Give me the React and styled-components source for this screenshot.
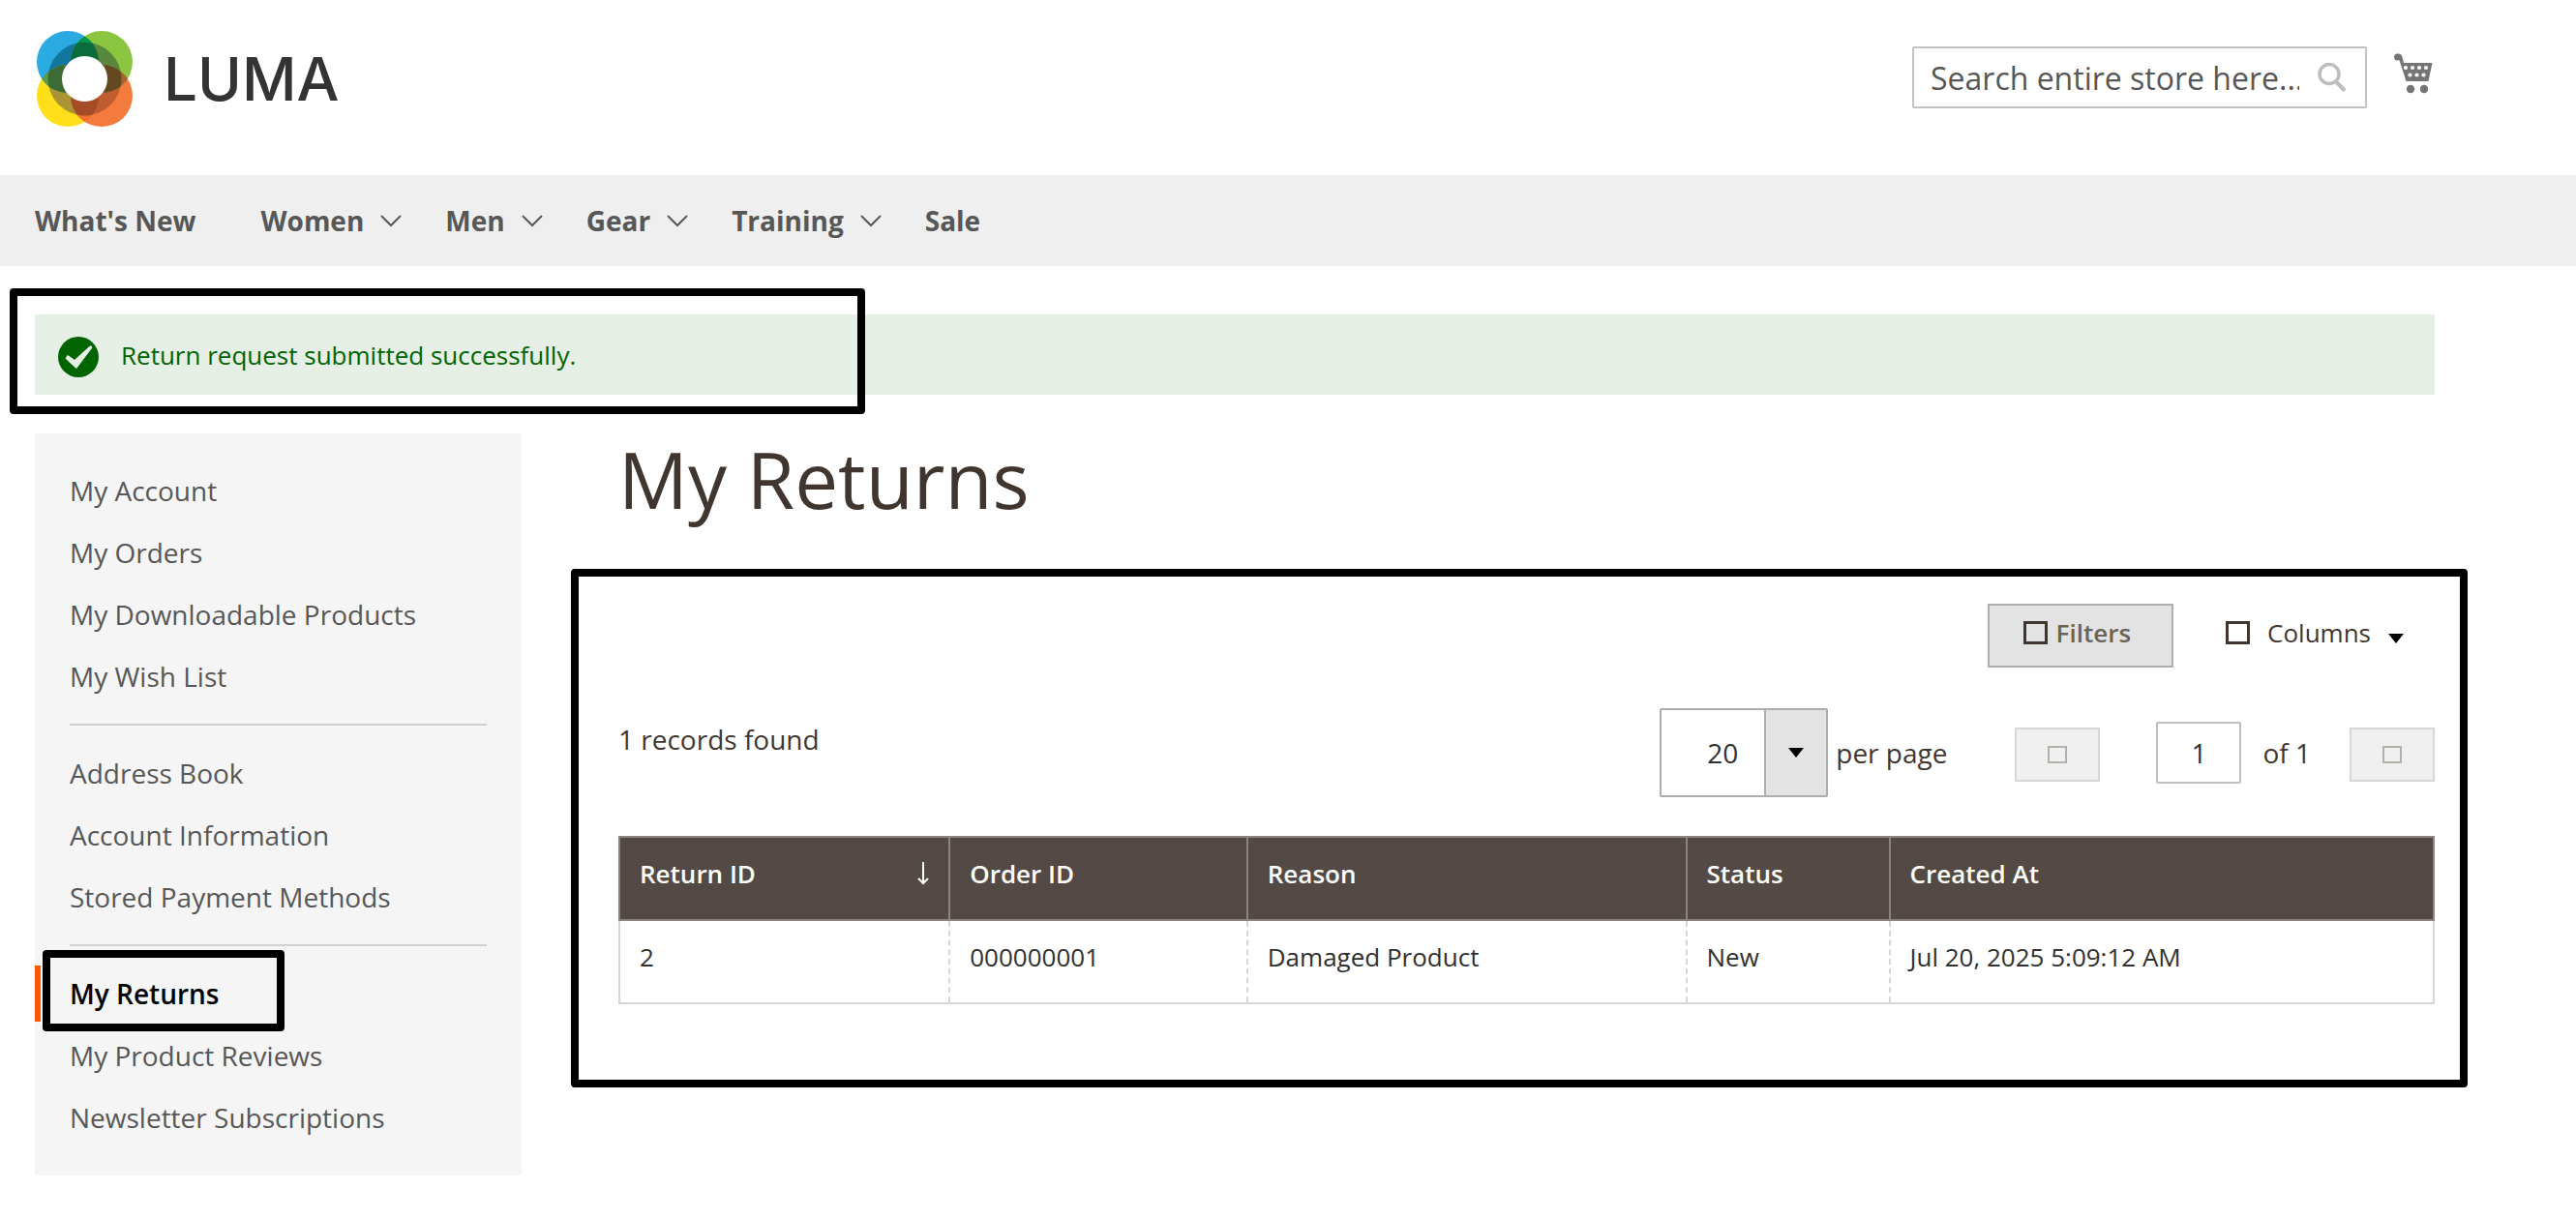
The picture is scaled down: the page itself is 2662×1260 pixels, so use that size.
import React from 'react';
import styled, { createGlobalStyle, css } from 'styled-components';

const GlobalStyle = createGlobalStyle`
  *, *::before, *::after { box-sizing: border-box; }
  body {
    margin: 0;
    background: #fff;
    color: #41362f;
    font-family: 'Open Sans', 'Noto Sans', sans-serif;
    font-size: 28px;
    line-height: 38px;
  }
  button, input, select { font: inherit; color: inherit; margin: 0; border-radius: 0; }
  a { color: inherit; text-decoration: none; }
  h1, p, ul { margin: 0; padding: 0; }
  ul { list-style: none; }
  svg { display: block; flex: none; }
`;

const container = css`
  max-width: 2552px;
  padding-left: 36px;
  padding-right: 36px;
`;

const Header = styled.header`
  ${container}
  display: flex;
  justify-content: space-between;
  align-items: flex-start;
  padding-top: 32px;
  padding-bottom: 50px;
`;

const Brand = styled.a`
  display: flex;
  align-items: center;
  gap: 32px;
  padding-left: 2px;
`;

const Wordmark = styled.span`
  font-family: Inter, sans-serif;
  font-weight: 500;
  font-size: 62px;
  line-height: 99px;
  color: #333;
`;

const HeaderTools = styled.div`
  display: flex;
  align-items: center;
  gap: 28px;
  padding-top: 16px;
`;

const SearchForm = styled.form`
  position: relative;
`;

const SearchInput = styled.input`
  display: block;
  width: 470px;
  height: 64px;
  padding: 0 68px 0 17px;
  border: 2px solid #c2c2c2;
  border-radius: 2px;
  background: #fff;
  font-size: 32px;
  &::placeholder { color: #575757; opacity: 1; }
`;

const SearchButton = styled.button`
  position: absolute;
  top: 0;
  right: 0;
  height: 64px;
  padding: 0 20px;
  border: 0;
  background: none;
`;

const CartLink = styled.a`
  padding: 0 2px 8px 0;
`;

const Nav = styled.nav`
  background: #efefef;
`;

const NavList = styled.ul`
  ${container}
  display: flex;
  gap: 45px;
`;

const NavLink = styled.a`
  display: flex;
  align-items: center;
  gap: 17px;
  padding-right: ${(p) => (p.$wide ? 22 : 0)}px;
  line-height: 94px;
  font-weight: 700;
  color: #575757;
`;

const Main = styled.main`
  ${container}
  padding-top: 50px;
  padding-bottom: 45px;
`;

const Marker = styled.span`
  position: absolute;
  border: 8px solid #000;
  border-radius: 4px;
  pointer-events: none;
`;

const Message = styled.div`
  position: relative;
  display: flex;
  align-items: center;
  gap: 23px;
  min-height: 83px;
  margin-bottom: 40px;
  padding: 0 24px;
  background: #e5efe5;
  color: #006400;
  font-size: 26px;
  svg { margin-top: 4px; }
`;

const MessageMarker = styled(Marker)`
  top: -27px;
  left: -26px;
  width: 884px;
  height: 130px;
`;

const Columns = styled.div`
  display: flex;
  align-items: flex-start;
  gap: 100px;
`;

const Sidebar = styled.nav`
  flex: none;
  width: 503px;
  padding: 30px 0 31px;
  background: #f5f5f5;
`;

const SideList = styled.ul`
  display: flex;
  flex-direction: column;
  gap: 6px;
`;

const SideItem = styled.li`
  position: relative;
`;

const SideLink = styled.a`
  display: block;
  padding-left: 30px;
  border-left: 6px solid ${(p) => (p.$current ? '#ff5501' : 'transparent')};
  line-height: 58px;
  font-weight: ${(p) => (p.$current ? 600 : 400)};
  color: ${(p) => (p.$current ? '#000' : '#575757')};
`;

const SideDivider = styled.li`
  height: 2px;
  margin: 14px 36px;
  background: #d1d1d1;
`;

const SideMarker = styled(Marker)`
  top: -16px;
  left: 8px;
  width: 250px;
  height: 84px;
`;

const Content = styled.div`
  flex: 1;
  min-width: 0;
`;

const Title = styled.h1`
  margin-bottom: 46px;
  font-size: 80px;
  line-height: 94px;
  font-weight: 400;
`;

const Panel = styled.section`
  position: relative;
  padding: 36px 0 86px;
`;

const PanelMarker = styled(Marker)`
  inset: 0 -34px 0 -49px;
`;

const Actions = styled.div`
  display: flex;
  justify-content: flex-end;
  gap: 20px;
  margin-bottom: 42px;
`;

const ActionButton = styled.button`
  display: flex;
  align-items: center;
  gap: ${(p) => (p.$filled ? 9 : 18)}px;
  height: 66px;
  padding: 0 ${(p) => (p.$filled ? 42 : 30)}px 7px ${(p) => (p.$filled ? 35 : 32)}px;
  border: 2px solid ${(p) => (p.$filled ? '#adadad' : 'transparent')};
  background: ${(p) => (p.$filled ? '#e3e3e3' : 'none')};
  color: ${(p) => (p.$filled ? '#6b6355' : '#41362f')};
  font-size: 26px;
  font-weight: ${(p) => (p.$filled ? 600 : 400)};
`;

const Box = styled.span`
  flex: none;
  width: ${(p) => (p.$small ? 20 : 25)}px;
  height: ${(p) => (p.$small ? 18 : 24)}px;
  border: ${(p) => (p.$small ? 2 : 3)}px solid ${(p) => (p.$small ? '#b5b0a7' : '#41362f')};
`;

const Caret = styled.span`
  flex: none;
  margin-top: ${(p) => (p.$low ? 12 : 0)}px;
  border: 8px solid transparent;
  border-top: 10px solid #000;
  border-bottom: 0;
`;

const Controls = styled.div`
  display: flex;
  justify-content: space-between;
  margin-bottom: 40px;
`;

const Records = styled.p`
  line-height: 64px;
`;

const Paging = styled.div`
  display: flex;
  align-items: center;
`;

const SizeLabel = styled.label`
  display: flex;
  align-items: center;
  gap: 8px;
  margin-right: 70px;
`;

const SizePicker = styled.span`
  position: relative;
  display: block;
`;

const SizeSelect = styled.select`
  display: block;
  width: 174px;
  height: 92px;
  padding: 0 0 0 47px;
  border: 2px solid #adadad;
  border-radius: 2px;
  background: #fff;
  color: #303030;
  appearance: none;
`;

const SizeArrow = styled.span`
  position: absolute;
  top: 2px;
  right: 2px;
  bottom: 2px;
  display: flex;
  align-items: center;
  justify-content: center;
  width: 64px;
  border-left: 2px solid #adadad;
  background: #e3e3e3;
  pointer-events: none;
`;

const PageButton = styled.button`
  display: flex;
  align-items: center;
  justify-content: center;
  width: 88px;
  height: 56px;
  margin-top: 4px;
  padding: 0;
  border: 2px solid #d6d6d6;
  background: #f0f0f0;
`;

const PageField = styled.label`
  display: flex;
  align-items: center;
  gap: 22px;
  margin: 0 40px 0 58px;
`;

const PageInput = styled.input`
  width: 88px;
  height: 64px;
  padding: 0;
  border: 2px solid #bfbfbf;
  border-radius: 2px;
  background: #fff;
  color: #303030;
  text-align: center;
`;

const Table = styled.table`
  width: 100%;
  border-collapse: collapse;
  table-layout: fixed;
  font-size: 26px;
  line-height: 36px;
`;

const Col = styled.col`
  width: ${(p) => p.$width}%;
`;

const HeadCell = styled.th`
  height: 86px;
  padding: 19px 20px;
  border: 2px solid #8a837f;
  background: #534a45;
  color: #fff;
  font-weight: 600;
  text-align: left;
  vertical-align: top;
`;

const HeadLabel = styled.span`
  display: flex;
  justify-content: space-between;
  align-items: center;
`;

const Cell = styled.td`
  height: 86px;
  padding: 19px 20px;
  border: 2px solid #d6d6d6;
  color: #303030;
  vertical-align: top;
  & + & { border-left-style: dashed; }
  &:not(:last-child) { border-right-style: dashed; }
`;

const LumaMark = () => (
  <svg width="99" height="99" viewBox="0 0 99 99" aria-hidden="true">
    <defs>
      <clipPath id="tl"><circle cx="32" cy="32" r="32" /></clipPath>
      <clipPath id="tr"><circle cx="67" cy="32" r="32" /></clipPath>
      <clipPath id="bl"><circle cx="32" cy="67" r="32" /></clipPath>
      <clipPath id="br"><circle cx="67" cy="67" r="32" /></clipPath>
    </defs>
    <circle cx="32" cy="67" r="32" fill="#ffde1a" />
    <circle cx="32" cy="32" r="32" fill="#2ba9e1" />
    <circle cx="67" cy="32" r="32" fill="#8cc540" />
    <circle cx="67" cy="67" r="32" fill="#f37b3d" />
    <circle cx="67" cy="32" r="32" fill="#00994a" clipPath="url(#tl)" />
    <circle cx="32" cy="67" r="32" fill="#5b9c46" clipPath="url(#tl)" />
    <circle cx="67" cy="67" r="32" fill="#a2652f" clipPath="url(#tr)" />
    <circle cx="67" cy="67" r="32" fill="#f0712f" clipPath="url(#bl)" />
    <circle cx="49.500" cy="49.500" r="38" fill="#11779f" clipPath="url(#tl)" />
    <circle cx="49.500" cy="49.500" r="38" fill="#5a873e" clipPath="url(#tr)" />
    <circle cx="49.500" cy="49.500" r="38" fill="#a99533" clipPath="url(#bl)" />
    <circle cx="49.500" cy="49.500" r="38" fill="#bf5d2e" clipPath="url(#br)" />
    <g clipPath="url(#tl)">
      <circle cx="49.500" cy="49.500" r="38" fill="#0a6c3a" clipPath="url(#tr)" />
      <circle cx="49.500" cy="49.500" r="38" fill="#3c6c33" clipPath="url(#bl)" />
    </g>
    <g clipPath="url(#br)">
      <circle cx="49.500" cy="49.500" r="38" fill="#64481f" clipPath="url(#tr)" />
      <circle cx="49.500" cy="49.500" r="38" fill="#a34c25" clipPath="url(#bl)" />
    </g>
    <circle cx="49.500" cy="49.500" r="23.500" fill="#fff" />
  </svg>
);

const SearchIcon = () => (
  <svg width="32" height="32" viewBox="0 0 32 32" fill="none" stroke="#bdbdbd" aria-hidden="true">
    <circle cx="13" cy="12.500" r="10" strokeWidth="3.500" />
    <path d="M20 20.500 28 28.500" strokeWidth="4" strokeLinecap="round" />
  </svg>
);

const holes = [
  [12, 15], [19, 15], [26, 15], [33, 15],
  [16.500, 22.500], [23.500, 22.500], [30.500, 22.500],
];

const CartIcon = () => (
  <svg width="40" height="42" viewBox="0 0 40 42" aria-hidden="true">
    <circle cx="3.500" cy="4" r="3.500" fill="#757575" />
    <path d="M4 .5C7 .5 8 2 8.500 4L10 10H39.500L35.500 29H12.500L5 6Z" fill="#757575" />
    <circle cx="17" cy="37" r="4.200" fill="#757575" />
    <circle cx="31" cy="37" r="4.200" fill="#757575" />
    {holes.map(([x, y]) => <circle key={`${x}-${y}`} cx={x} cy={y} r="2.100" fill="#fff" />)}
  </svg>
);

const Chevron = () => (
  <svg width="22" height="16" viewBox="0 0 22 16" fill="none" stroke="#575757" strokeWidth="2" aria-hidden="true">
    <path d="M1 3 11 13 21 3" />
  </svg>
);

const CheckIcon = () => (
  <svg width="42" height="42" viewBox="0 0 42 42" aria-hidden="true">
    <circle cx="21" cy="21" r="21" fill="#006400" />
    <path d="M8.500 22.500 10 20 17 25 33.500 10 34.500 11.200 18.800 32Z" fill="#e5efe5" stroke="#e5efe5" strokeWidth="1.600" strokeLinejoin="round" />
  </svg>
);

const SortArrow = () => (
  <svg width="12" height="24" viewBox="0 0 12 24" fill="none" stroke="#fff" strokeWidth="2" aria-hidden="true">
    <path d="M6 0V21M1 17 6 22 11 17" />
  </svg>
);

const navItems = [
  { label: "What's New", wide: true },
  { label: 'Women', menu: true },
  { label: 'Men', menu: true },
  { label: 'Gear', menu: true },
  { label: 'Training', menu: true },
  { label: 'Sale' },
];

const sideGroups = [
  ['My Account', 'My Orders', 'My Downloadable Products', 'My Wish List'],
  ['Address Book', 'Account Information', 'Stored Payment Methods'],
  ['My Returns', 'My Product Reviews', 'Newsletter Subscriptions'],
];

const tableColumns = [
  { label: 'Return ID', width: 18.2, sorted: true },
  { label: 'Order ID', width: 16.4 },
  { label: 'Reason', width: 24.2 },
  { label: 'Status', width: 11.2 },
  { label: 'Created At', width: 30 },
];

const rows = [['2', '000000001', 'Damaged Product', 'New', 'Jul 20, 2025 5:09:12 AM']];

export default function App() {
  return (
    <>
      <GlobalStyle />
      <Header>
        <Brand href="#">
          <LumaMark />
          <Wordmark>LUMA</Wordmark>
        </Brand>
        <HeaderTools>
          <SearchForm role="search">
            <SearchInput type="text" aria-label="Search" placeholder="Search entire store here..." />
            <SearchButton type="button" aria-label="Search"><SearchIcon /></SearchButton>
          </SearchForm>
          <CartLink href="#" aria-label="My Cart"><CartIcon /></CartLink>
        </HeaderTools>
      </Header>
      <Nav>
        <NavList>
          {navItems.map((item) => (
            <li key={item.label}>
              <NavLink href="#" $wide={item.wide}>
                {item.label}
                {item.menu && <Chevron />}
              </NavLink>
            </li>
          ))}
        </NavList>
      </Nav>
      <Main>
        <Message role="alert">
          <CheckIcon />
          <span>Return request submitted successfully.</span>
          <MessageMarker />
        </Message>
        <Columns>
          <Sidebar>
            <SideList>
              {sideGroups.map((group, index) => (
                <React.Fragment key={group[0]}>
                  {index > 0 && <SideDivider role="separator" />}
                  {group.map((label) => {
                    const current = label === 'My Returns';
                    return (
                      <SideItem key={label}>
                        <SideLink href="#" $current={current}>{label}</SideLink>
                        {current && <SideMarker />}
                      </SideItem>
                    );
                  })}
                </React.Fragment>
              ))}
            </SideList>
          </Sidebar>
          <Content>
            <Title>My Returns</Title>
            <Panel>
              <Actions>
                <ActionButton type="button" $filled><Box />Filters</ActionButton>
                <ActionButton type="button"><Box />Columns<Caret $low /></ActionButton>
              </Actions>
              <Controls>
                <Records>1 records found</Records>
                <Paging>
                  <SizeLabel>
                    <SizePicker>
                      <SizeSelect defaultValue="20">
                        <option>20</option>
                        <option>30</option>
                        <option>50</option>
                      </SizeSelect>
                      <SizeArrow><Caret /></SizeArrow>
                    </SizePicker>
                    per page
                  </SizeLabel>
                  <PageButton type="button" disabled aria-label="Previous page"><Box $small /></PageButton>
                  <PageField>
                    <PageInput type="text" defaultValue="1" />
                    of 1
                  </PageField>
                  <PageButton type="button" disabled aria-label="Next page"><Box $small /></PageButton>
                </Paging>
              </Controls>
              <Table>
                <colgroup>
                  {tableColumns.map((c) => <Col key={c.label} $width={c.width} />)}
                </colgroup>
                <thead>
                  <tr>
                    {tableColumns.map((c) => (
                      <HeadCell key={c.label} scope="col">
                        <HeadLabel>{c.label}{c.sorted && <SortArrow />}</HeadLabel>
                      </HeadCell>
                    ))}
                  </tr>
                </thead>
                <tbody>
                  {rows.map((row) => (
                    <tr key={row[0]}>
                      {row.map((value) => <Cell key={value}>{value}</Cell>)}
                    </tr>
                  ))}
                </tbody>
              </Table>
              <PanelMarker />
            </Panel>
          </Content>
        </Columns>
      </Main>
    </>
  );
}
